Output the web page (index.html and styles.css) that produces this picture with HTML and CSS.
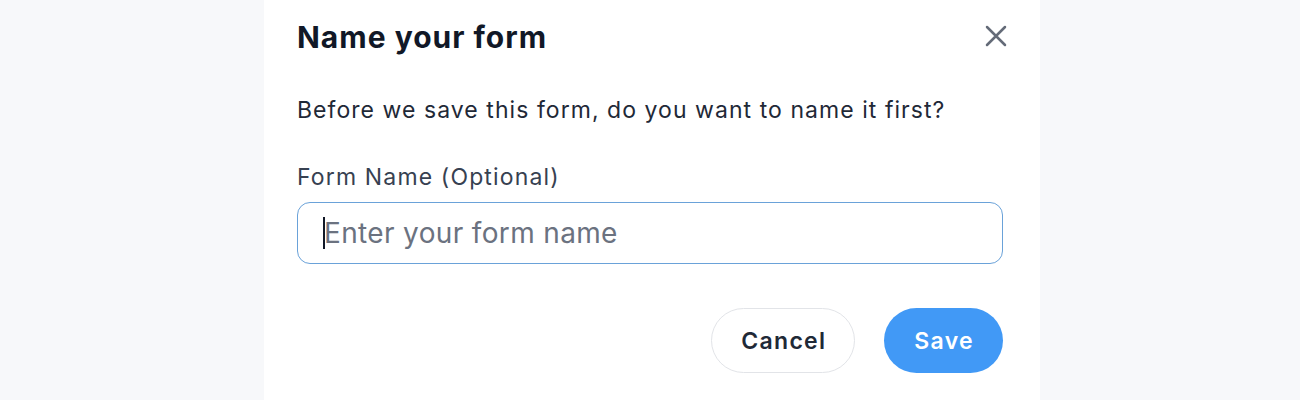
FILE: index.html
```html
<!DOCTYPE html>
<html lang="en">
<head>
<meta charset="utf-8">
<title>Name your form</title>
<link rel="stylesheet" href="styles.css">
</head>
<body>
<div class="page">
  <div class="dialog">
    <div class="header">
      <h1 class="title">Name your form</h1>
      <button class="close" aria-label="Close">
        <svg width="22" height="22" viewBox="0 0 22 22" fill="none" stroke="currentColor" stroke-width="2.5" stroke-linecap="round">
          <path d="M2 2 L20 20 M20 2 L2 20"/>
        </svg>
      </button>
    </div>
    <p class="desc">Before we save this form, do you want to name it first?</p>
    <label class="label">Form Name (Optional)</label>
    <div class="input"><span class="caret"></span><span class="placeholder">Enter your form name</span></div>
    <div class="actions">
      <button class="btn btn-cancel">Cancel</button>
      <button class="btn btn-save">Save</button>
    </div>
  </div>
</div>
</body>
</html>
```

FILE: styles.css
```css
html, body {
  margin: 0;
  padding: 0;
}
body {
  background: #f7f8fa;
  font-family: Inter, "Noto Sans", "Liberation Sans", sans-serif;
  height: 400px;
  overflow: hidden;
}
.page {
  display: flex;
  padding-left: 264px;
}
.dialog {
  width: 776px;
  height: 400px;
  box-sizing: border-box;
  background: #ffffff;
  padding: 16px 37px 0 33px;
  display: flex;
  flex-direction: column;
}
.header {
  display: flex;
  justify-content: space-between;
  align-items: center;
}
.title {
  margin: 0;
  font-size: 30px;
  line-height: 42px;
  font-weight: 700;
  color: #111827;
  letter-spacing: 1px;
}
.close {
  border: 0;
  background: transparent;
  padding: 0;
  margin-right: -4px;
  margin-top: -2px;
  color: #646b78;
  display: flex;
  width: 22px;
  height: 22px;
}
.desc {
  margin: 37px 0 0;
  font-size: 23px;
  line-height: 30px;
  color: #1f2937;
  letter-spacing: 1.05px;
}
.label {
  display: block;
  margin-top: 37px;
  font-size: 23px;
  line-height: 30px;
  color: #374151;
  letter-spacing: 1.15px;
}
.input {
  margin-top: 10px;
  height: 62px;
  box-sizing: border-box;
  border: 1px solid #6aa2d9;
  border-radius: 13px;
  display: flex;
  align-items: center;
  padding-left: 25px;
}
.caret {
  width: 2px;
  height: 32px;
  background: #111827;
  margin-right: -1px;
}
.placeholder {
  font-size: 28px;
  color: #6b7280;
  letter-spacing: 0.35px;
}
.actions {
  margin-top: 44px;
  display: flex;
  justify-content: flex-end;
  gap: 29px;
}
.btn {
  font-family: Inter, "Noto Sans", "Liberation Sans", sans-serif;
  height: 65px;
  border-radius: 33px;
  font-size: 23px;
  font-weight: 600;
  letter-spacing: 1.3px;
  box-sizing: border-box;
}
.btn-cancel {
  background: #ffffff;
  border: 1px solid #e2e4e8;
  color: #1f2937;
  padding: 0 28px 0 29px;
}
.btn-save {
  background: #4199f6;
  border: 0;
  color: #ffffff;
  padding: 0 29px 0 30px;
}
```
